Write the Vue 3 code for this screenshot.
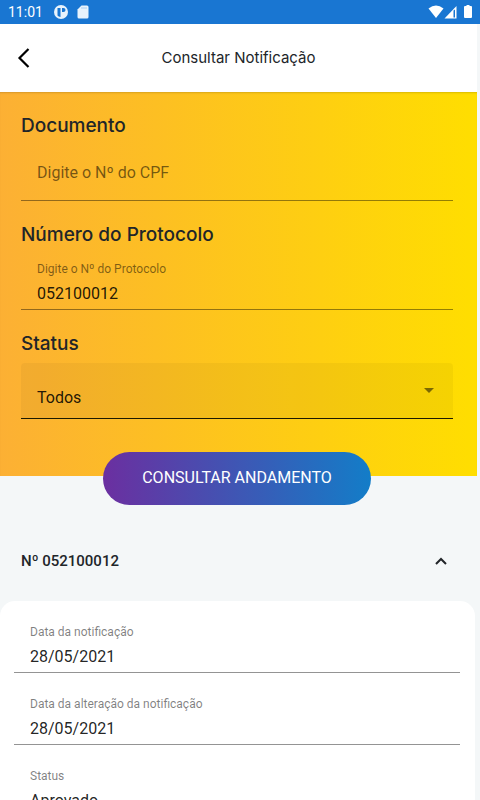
<script setup>
import { ref } from "vue";

const documento = ref("");
const protocolo = ref("052100012");
const status = ref("Todos");
const aberto = ref(true);

const campos = ref([
  { id: "data", label: "Data da notificação", value: "28/05/2021" },
  { id: "alteracao", label: "Data da alteração da notificação", value: "28/05/2021" },
  { id: "situacao", label: "Status", value: "Aprovado" },
]);
</script>

<template>
  <div class="page">
    <div class="status-bar">
      <span class="clock">11:01</span>
      <svg class="app-icon" width="14" height="14" viewBox="0 0 14 14">
        <circle cx="7" cy="7" r="7" fill="#e9f3fc" />
        <path d="M3.500 3h3v9q-2-0.500-3-1.500z" fill="#1976d2" />
        <path d="M8 3h1.500a2 2 0 0 1 0 4H8z" fill="#1976d2" />
      </svg>
      <svg class="card-icon" width="12" height="14" viewBox="0 0 12 14">
        <path d="M4.500 0.500H10q1.500 0 1.500 1.500v10q0 1.500-1.500 1.500H2q-1.500 0-1.500-1.500V4.500z" fill="#e9f3fc" />
        <path d="M5 2v2M7 2v2M9 2v2" stroke="#a9cdf0" />
      </svg>
      <svg class="wifi" width="16" height="14" viewBox="0 0 16 14">
        <path d="M0.500 3.500Q8-2.500 15.500 3.500L8 13z" fill="#fff" />
      </svg>
      <svg width="13" height="14" viewBox="0 0 13 14">
        <path d="M0.500 13.500L12.500 1v12.500z" fill="#fff" />
        <path d="M9.500 5.500v7h1.500V4.500z" fill="#1976d2" />
      </svg>
      <svg class="battery" width="8" height="14" viewBox="0 0 8 14">
        <path d="M2.500 0h3v1H7q1 0 1 1V12q0 1-1 1H1q-1 0-1-1V2q0-1 1-1h1.500z" fill="#fff" />
      </svg>
    </div>

    <header class="header">
      <button class="back" type="button" aria-label="Voltar">
        <svg width="14" height="20" viewBox="0 0 14 20">
          <path d="M11.500 1L2.500 10l9 9" fill="none" stroke="#000" stroke-width="2.200" />
        </svg>
      </button>
      <h1>Consultar Notificação</h1>
    </header>

    <main>
      <form class="filters" @submit.prevent>
        <div class="group">
          <h2>Documento</h2>
          <div class="field">
            <input
              id="documento"
              v-model="documento"
              class="empty"
              type="text"
              aria-label="Documento"
              placeholder="Digite o Nº do CPF"
            />
          </div>
        </div>
        <div class="group">
          <h2>Número do Protocolo</h2>
          <div class="field">
            <label for="protocolo">Digite o Nº do Protocolo</label>
            <input id="protocolo" v-model="protocolo" type="text" />
          </div>
        </div>
        <div class="group">
          <h2><label for="status">Status</label></h2>
          <div class="field select">
            <select id="status" v-model="status">
              <option>Todos</option>
              <option>Aprovado</option>
            </select>
            <svg width="10" height="5" viewBox="0 0 10 5">
              <path d="M0 0h10L5 5z" fill="#7a6803" />
            </svg>
          </div>
        </div>
      </form>

      <div class="actions">
        <button class="submit" type="button">CONSULTAR ANDAMENTO</button>
      </div>

      <button class="toggle" type="button" :aria-expanded="aberto" @click="aberto = !aberto">
        <span>Nº 052100012</span>
        <svg :class="{ closed: !aberto }" width="12" height="8" viewBox="0 0 12 8">
          <path d="M1 7l5-5 5 5" fill="none" stroke="#212529" stroke-width="2" />
        </svg>
      </button>

      <section v-if="aberto" class="card">
        <div v-for="campo in campos" :key="campo.id" class="field">
          <label :for="campo.id">{{ campo.label }}</label>
          <input :id="campo.id" :value="campo.value" type="text" readonly />
        </div>
      </section>
    </main>
  </div>
</template>

<style>
body {
  background: #f4f7f8;
  scrollbar-width: none;
}
</style>

<style scoped>
.page {
  font-family: Roboto, "Liberation Sans", sans-serif;
  color: #212529;
}

.page * {
  box-sizing: border-box;
}

button,
input,
select {
  font: inherit;
  color: inherit;
  border: 0;
  background: none;
}

.status-bar {
  display: flex;
  align-items: center;
  height: 24px;
  padding: 0 8px;
  background: #1976d2;
  color: #fff;
}

.clock {
  font-size: 14px;
}

.app-icon {
  margin-left: 11px;
}

.card-icon {
  margin-left: 9px;
}

.wifi {
  margin-left: auto;
}

.battery {
  margin-left: 7px;
}

.header {
  display: grid;
  grid-template-columns: 48px 1fr 48px;
  align-items: center;
  height: 68px;
  margin-right: 3px;
  background: #fff;
}

.back {
  display: flex;
  justify-content: center;
  padding: 12px 0;
}

h1 {
  margin: 0;
  font-family: Inter, "Open Sans", sans-serif;
  font-size: 15px;
  font-weight: 400;
  line-height: 24px;
  text-align: center;
}

main {
  padding-right: 3px;
}

.filters {
  display: flex;
  flex-direction: column;
  gap: 22px;
  padding: 22px 24px 57px 21px;
  background: linear-gradient(90deg, #fcb034, #ffde00);
  box-shadow: inset 0 2px 2px -1px rgba(0, 0, 0, 0.15);
}

h2 {
  margin: 0 0 7px;
  font-family: Inter, "Open Sans", sans-serif;
  font-size: 19px;
  font-weight: 500;
  line-height: 24px;
}

.field {
  display: flex;
  flex-direction: column;
  height: 56px;
  padding-top: 7px;
  border-bottom: 1px solid rgba(0, 0, 0, 0.42);
}

.field label {
  padding: 0 16px;
  font-size: 12px;
  line-height: 16px;
  color: rgba(0, 0, 0, 0.5);
}

.field input {
  width: 100%;
  height: 32px;
  padding: 1px 16px 0;
  font-size: 16px;
  color: rgba(0, 0, 0, 0.87);
  outline: none;
}

.field .empty {
  height: 40px;
  padding-top: 0;
}

.field input::placeholder {
  color: rgba(0, 0, 0, 0.55);
  opacity: 1;
}

.select {
  flex-direction: row;
  align-items: center;
  padding: 0 19px 0 0;
  border-bottom-color: #1c1900;
  border-radius: 4px 4px 0 0;
  background: rgba(0, 0, 0, 0.04);
}

.select select {
  flex: 1;
  height: 55px;
  padding: 14px 16px 0;
  font-size: 16px;
  color: rgba(0, 0, 0, 0.87);
  appearance: none;
  outline: none;
}

.actions {
  display: flex;
  justify-content: center;
  margin-top: -24px;
  padding: 0 24px 0 21px;
}

.submit {
  padding: 14px 39px 15px;
  border-radius: 27px;
  background: linear-gradient(90deg, #6b2fa0, #137dc8);
  color: #fff;
  font-size: 16px;
  line-height: 24px;
}

.toggle {
  display: flex;
  align-items: center;
  justify-content: space-between;
  width: 100%;
  height: 80px;
  margin-top: 16px;
  padding: 0 30px 0 21px;
  font-size: 15px;
  font-weight: 500;
}

.closed {
  transform: rotate(180deg);
}

.card {
  display: flex;
  flex-direction: column;
  gap: 16px;
  margin-right: 2px;
  padding: 16px 15px 16px 14px;
  border-radius: 15px 15px 0 0;
  background: #fff;
}
</style>
